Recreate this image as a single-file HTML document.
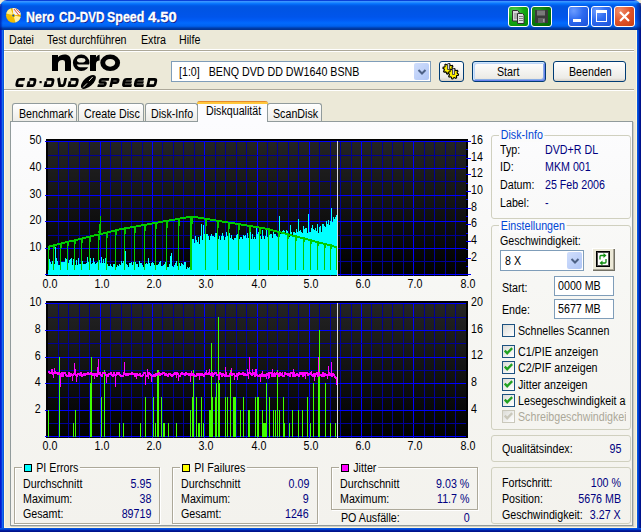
<!DOCTYPE html><html><head><meta charset="utf-8"><style>
*{margin:0;padding:0;box-sizing:border-box}
html,body{width:641px;height:532px;overflow:hidden;background:#ECE9D8;position:relative;font-family:"Liberation Sans",sans-serif;font-size:11px}
.a{position:absolute}
.t{position:absolute;white-space:nowrap;line-height:13px;font-size:12px;letter-spacing:0;transform:scaleX(0.89);transform-origin:0 0}
.gb{position:absolute;border:1px solid #D0D0BF;border-radius:3px}
.eg{position:absolute;border:1px solid #ACA899;box-shadow:1px 1px 0 #fff, inset 1px 1px 0 #fff}
.cb{position:absolute;width:13px;height:13px;border:1px solid #1C5180;background:linear-gradient(135deg,#DCDCD7,#fff)}
.inp{position:absolute;border:1px solid #7F9DB9;background:#fff}
</style></head><body>

<div class="a" style="left:0;top:0;width:641px;height:30px;border-radius:7px 7px 0 0;background:linear-gradient(to bottom,#0A40D8 0px,#0A40D8 1px,#3D95FF 1px,#3593FF 2px,#288EFF 2px,#1A82FF 3px,#127DFF 3px,#036FFC 4px,#0262EE 5px,#0057E5 6px,#0054E3 8px,#0055EB 17px,#005BF5 20px,#026AFE 23px,#0062EF 26px,#0052D6 27px,#0040AB 28px,#003092 30px)"></div>
<div class="a" style="left:636px;top:3px;width:5px;height:27px;background:linear-gradient(to right,rgba(0,20,120,0) 0,rgba(0,20,120,0.25) 1px,rgba(0,20,120,0.45) 3px,rgba(0,10,100,0.7) 5px)"></div>
<div class="a" style="left:0;top:4px;width:3px;height:26px;background:linear-gradient(to right,rgba(0,10,140,0.55) 0,rgba(0,10,140,0.55) 1px,rgba(0,10,140,0.15) 2px,rgba(0,10,140,0) 3px)"></div>
<div class="a" style="left:0;top:30px;width:4px;height:502px;background:linear-gradient(to right,#0019CF 0,#0019CF 1px,#0831D9 1px,#0831D9 2px,#166AEE 2px,#166AEE 3px,#0855DD 3px)"></div>
<div class="a" style="left:637px;top:30px;width:4px;height:502px;background:linear-gradient(to right,#0855DD 0,#0855DD 1px,#0040D0 1px,#0040D0 2px,#001EA0 2px,#001EA0 3px,#00138C 3px)"></div>
<div class="a" style="left:0;top:528px;width:641px;height:4px;background:linear-gradient(to bottom,#0855DD 0,#0855DD 1px,#0040D0 1px,#0040D0 2px,#001EA0 2px,#001EA0 3px,#00138C 3px)"></div>
<div class="a" style="left:4px;top:30px;width:1px;height:498px;background:#FFF8DC"></div>
<div class="a" style="left:636px;top:30px;width:1px;height:498px;background:#FFF8DC"></div>
<div class="a" style="left:4px;top:527px;width:633px;height:1px;background:#FFF8DC"></div>
<svg class="a" style="left:5px;top:7px" width="18" height="18" viewBox="0 0 18 18">
<circle cx="8.4" cy="8.3" r="7.4" fill="#F0BC00"/>
<path d="M8.4 8.3L1.2 6.6A7.4 7.4 0 0 1 5.6 1.4Z" fill="#FFEE90"/>
<path d="M8.4 8.3L15.6 10A7.4 7.4 0 0 1 10.5 15.4Z" fill="#FFF0A0"/>
<path d="M8.4 8.3L7.6 0.95A7.4 7.4 0 0 1 15.8 7.6Z" fill="#F2F2F2"/>
<path d="M9 2L14 8.5M11 1.8L15 6" stroke="#E83818" stroke-width="1" opacity="0.85"/>
<circle cx="8.3" cy="8.6" r="1.9" fill="#F8D000"/>
<circle cx="8.3" cy="8.6" r="1.1" fill="#1848B8"/>
</svg>
<div class="t" style="left:25.8px;top:7px;font-size:14px;font-weight:bold;color:#fff;line-height:20px;letter-spacing:0;text-shadow:1px 1px #0A1E8C;-webkit-text-stroke:0.3px #fff;transform:scaleX(0.891);transform-origin:0 0">Nero</div>
<div class="t" style="left:58.6px;top:7px;font-size:14px;font-weight:bold;color:#fff;line-height:20px;letter-spacing:0;text-shadow:1px 1px #0A1E8C;-webkit-text-stroke:0.3px #fff;transform:scaleX(0.835);transform-origin:0 0">CD-DVD</div>
<div class="t" style="left:107.4px;top:7px;font-size:14px;font-weight:bold;color:#fff;line-height:20px;letter-spacing:0;text-shadow:1px 1px #0A1E8C;-webkit-text-stroke:0.3px #fff;transform:scaleX(0.888);transform-origin:0 0">Speed</div>
<div class="t" style="left:148.4px;top:7px;font-size:14px;font-weight:bold;color:#fff;line-height:20px;letter-spacing:0;text-shadow:1px 1px #0A1E8C;-webkit-text-stroke:0.3px #fff;transform:scaleX(1.052);transform-origin:0 0">4.50</div>
<div class="a" style="left:508px;top:6px;width:21px;height:21px;border:1px solid #fff;border-radius:3px;background:radial-gradient(circle at 30% 25%,#5AD05A 0%,#16A816 45%,#008A00 100%)"></div>
<svg class="a" style="left:511px;top:9px" width="16" height="16" viewBox="0 0 16 16">
<path d="M1.5 1.5h5l1.5 1.5v9h-6.5z" fill="#D8D8D8" stroke="#303030" stroke-width="1"/>
<path d="M6.5 4.5h5l1.5 1.5v8.5h-6.5z" fill="#E0E0E0" stroke="#303030" stroke-width="1"/>
<path d="M3 5h3M3 7h3M3 9h3M8 7.5h4M8 9.5h4M8 11.5h4" stroke="#808080" stroke-width="1"/>
</svg>
<div class="a" style="left:531px;top:6px;width:21px;height:21px;border:1px solid #fff;border-radius:3px;background:radial-gradient(circle at 30% 25%,#2A9A2A 0%,#0A7A0A 50%,#006600 100%)"></div>
<svg class="a" style="left:534px;top:9px" width="15" height="15" viewBox="0 0 15 15">
<rect x="1" y="1" width="13" height="13" fill="#3A3A3A"/>
<rect x="3" y="1.5" width="8" height="5" fill="#7A7A7A"/>
<rect x="4" y="9" width="7" height="5" fill="#606060"/>
<rect x="9" y="10" width="1.5" height="3" fill="#9A9A9A"/>
</svg>
<div class="a" style="left:568px;top:6px;width:21px;height:21px;border:1px solid #fff;border-radius:3px;background:radial-gradient(circle at 25% 20%,#6C9CFF 0%,#2E6BF0 45%,#1A50D8 100%)"></div>
<div class="a" style="left:573px;top:19px;width:8px;height:3px;background:#fff"></div>
<div class="a" style="left:591px;top:6px;width:21px;height:21px;border:1px solid #fff;border-radius:3px;background:radial-gradient(circle at 25% 20%,#6C9CFF 0%,#2E6BF0 45%,#1A50D8 100%)"></div>
<div class="a" style="left:596px;top:10px;width:11px;height:12px;border:1px solid #fff;border-top-width:3px"></div>
<div class="a" style="left:614px;top:6px;width:21px;height:21px;border:1px solid #fff;border-radius:3px;background:radial-gradient(circle at 25% 20%,#F08E6C 0%,#E0542A 50%,#C83E10 100%)"></div>
<svg class="a" style="left:619px;top:11px" width="11" height="11" viewBox="0 0 11 11"><path d="M1 1L10 10M10 1L1 10" stroke="#fff" stroke-width="2.2"/></svg>

<div class="t" style="left:9px;top:34px;color:#000;">Datei</div>
<div class="t" style="left:47px;top:34px;color:#000;">Test durchführen</div>
<div class="t" style="left:141px;top:34px;color:#000;">Extra</div>
<div class="t" style="left:179px;top:34px;color:#000;">Hilfe</div>
<div class="a" style="left:4px;top:49px;width:630px;height:1px;background:#fff"></div>
<div class="a" style="left:4px;top:50px;width:630px;height:1px;background:#ACA899"></div>
<div class="a" style="left:4px;top:51px;width:630px;height:1px;background:#fff"></div>
<div class="a" style="left:4px;top:89px;width:630px;height:1px;background:#ACA899"></div>
<div class="a" style="left:4px;top:90px;width:630px;height:1px;background:#fff"></div>
<svg class="a" style="left:0;top:50px" width="170" height="40" viewBox="0 50 170 40">
<path d="M52 71V55H58V57.2C59.5 55.5 61.8 54.5 64.5 54.5C68.8 54.5 71 57 71 61.5V71H65V62.5C65 60.8 64.2 60 62.4 60C59.8 60 58 61.3 58 63.8V71Z" fill="#000"/>
<ellipse cx="81.2" cy="62.8" rx="8.3" ry="8.3" fill="#000"/>
<ellipse cx="81.2" cy="60.2" rx="4.2" ry="2.3" fill="#ECE9D8"/>
<path d="M76.8 64.6H90V67.2H80.2C78.6 67.2 77.3 66.2 76.8 64.6Z" fill="#ECE9D8"/>
<path d="M90 71V55H96V57.6C97 55.6 98.2 54.8 99.6 54.8V60.6C97.6 60.6 96 61.6 96 64.2V71Z" fill="#000"/>
<ellipse cx="110.2" cy="62.8" rx="9.9" ry="8.3" fill="#000"/>
<ellipse cx="110.2" cy="62.8" rx="5.0" ry="3.9" fill="#ECE9D8"/>
<g fill="none" stroke="#000" stroke-width="2.7" stroke-linecap="square"><path transform="translate(16.80 78) skewX(-12.5)" d="M6.8999999999999995 1.3H3.3Q1.3 1.3 1.3 3.3V5.7Q1.3 7.7 3.3 7.7H6.8999999999999995"/><path transform="translate(28.50 78) skewX(-12.5)" d="M2.50 1.3H5.2Q7.2 1.3 7.2 3.3V5.7Q7.2 7.7 5.2 7.7H1.3M1.3 4.6V7.7"/><path transform="translate(45.50 78) skewX(-12.5)" d="M2.50 1.3H6.199999999999999Q8.2 1.3 8.2 3.3V5.7Q8.2 7.7 6.199999999999999 7.7H1.3M1.3 4.6V7.7"/><path transform="translate(57.70 78) skewX(-12.5)" d="M1.3 1.3L3.72 7.7H5.999999999999997Q7.999999999999997 7.7 7.999999999999997 5.7V1.3"/><path transform="translate(69.50 78) skewX(-12.5)" d="M2.50 1.3H6.4999999999999964Q8.499999999999996 1.3 8.499999999999996 3.3V5.7Q8.499999999999996 7.7 6.4999999999999964 7.7H1.3M1.3 4.6V7.7"/><path transform="translate(99.40 78) skewX(-12.5)" d="M8.599999999999994 1.3H2.9000000000000004Q1.3 1.3 1.3 2.9Q1.3 4.5 2.9000000000000004 4.5H5.699999999999994Q7.2999999999999945 4.5 7.2999999999999945 6.1Q7.2999999999999945 7.7 5.699999999999994 7.7H1.3"/><path transform="translate(111.30 78) skewX(-12.5)" d="M1.3 7.7V1.3H5.8000000000000025Q7.400000000000003 1.3 7.400000000000003 2.9Q7.400000000000003 4.6 5.8000000000000025 4.6H1.3"/><path transform="translate(123.50 78) skewX(-12.5)" d="M7.2 1.3H3.3Q1.3 1.3 1.3 3.3V5.7Q1.3 7.7 3.3 7.7H8.5M2.3 4.5H7.7"/><path transform="translate(135.30 78) skewX(-12.5)" d="M7.399999999999989 1.3H3.3Q1.3 1.3 1.3 3.3V5.7Q1.3 7.7 3.3 7.7H8.699999999999989M2.3 4.5H7.899999999999989"/><path transform="translate(148.20 78) skewX(-12.5)" d="M1.3 1.3H6.300000000000022Q8.300000000000022 1.3 8.300000000000022 3.3V5.7Q8.300000000000022 7.7 6.300000000000022 7.7H1.3Z"/></g>
<rect x="39.5" y="81" width="2.2" height="2.2" fill="#000"/>
<g transform="translate(88.4 81.9) rotate(-42)"><ellipse cx="0" cy="0" rx="9.2" ry="4.5" fill="#000"/><path d="M-7.5 0.6L-2 0.2M1 -0.2L6.5 -0.8" fill="none" stroke="#ECE9D8" stroke-width="0.9"/></g>
</svg>
<div class="inp" style="left:171px;top:61px;width:260px;height:21px"></div>
<div class="a" style="left:414px;top:63px;width:15px;height:17px;border-radius:2px;background:linear-gradient(135deg,#D0DEFC,#B0C6F6)"></div>
<svg class="a" style="left:417px;top:68px" width="10" height="8" viewBox="0 0 10 8"><path d="M1.5 2L5 5.5L8.5 2" fill="none" stroke="#4D6185" stroke-width="2"/></svg>
<div class="t" style="left:179px;top:66px;color:#000;">[1:0]&nbsp;&nbsp; BENQ DVD DD DW1640 BSNB</div>
<div class="a" style="left:439px;top:61px;width:25px;height:21px;border:1px solid #003C74;border-radius:3px;background:linear-gradient(to bottom,#fff,#ECEBE6 80%,#D6D0C5)"></div>
<svg class="a" style="left:439px;top:61px" width="25" height="21" viewBox="0 0 25 21">
<polygon points="14.47,8.32 14.27,9.34 12.73,9.69 12.29,10.34 12.56,11.90 11.70,12.47 10.36,11.63 9.59,11.78 8.68,13.07 7.66,12.87 7.31,11.33 6.66,10.89 5.10,11.16 4.53,10.30 5.37,8.96 5.22,8.19 3.93,7.28 4.13,6.26 5.67,5.91 6.11,5.26 5.84,3.70 6.70,3.13 8.04,3.97 8.81,3.82 9.72,2.53 10.74,2.73 11.09,4.27 11.74,4.71 13.30,4.44 13.87,5.30 13.03,6.64 13.18,7.41" fill="#FFF000" stroke="#000" stroke-width="1.1"/>
<polygon points="19.57,13.22 19.37,14.24 17.83,14.59 17.39,15.24 17.66,16.80 16.80,17.37 15.46,16.53 14.69,16.68 13.78,17.97 12.76,17.77 12.41,16.23 11.76,15.79 10.20,16.06 9.63,15.20 10.47,13.86 10.32,13.09 9.03,12.18 9.23,11.16 10.77,10.81 11.21,10.16 10.94,8.60 11.80,8.03 13.14,8.87 13.91,8.72 14.82,7.43 15.84,7.63 16.19,9.17 16.84,9.61 18.40,9.34 18.97,10.20 18.13,11.54 18.28,12.31" fill="#FFF000" stroke="#000" stroke-width="1.1"/>
<path d="M8.5 8.5V3.2L9.5 2L10.5 3.2V8.5z" fill="#D0D0E0" stroke="#303030" stroke-width="0.8"/>
<path d="M13.5 13.5V8.2L14.5 7L15.5 8.2V13.5z" fill="#D0D0E0" stroke="#303030" stroke-width="0.8"/>
</svg>
<div class="a" style="left:472px;top:61px;width:74px;height:21px;border:1px solid #003C74;border-radius:3px;background:linear-gradient(to bottom,#fff,#ECEBE6 85%,#D6D0C5);box-shadow:inset 1px 1px #CEE7FF, inset -1px -1px #6982EE, inset 2px 2px #BCD4F6, inset -2px -2px #89ADE4"></div>
<div class="t" style="left:497px;top:66px;color:#000;">Start</div>
<div class="a" style="left:553px;top:61px;width:73px;height:21px;border:1px solid #003C74;border-radius:3px;background:linear-gradient(to bottom,#fff,#ECEBE6 85%,#D6D0C5)"></div>
<div class="t" style="left:569px;top:66px;color:#000;">Beenden</div>
<div class="a" style="left:12px;top:103px;width:65px;height:19px;border:1px solid #919B9C;border-bottom:none;border-radius:3px 3px 0 0;background:linear-gradient(to bottom,#fff,#ECEBE6)"></div>
<div class="t" style="left:19px;top:108px;color:#000;">Benchmark</div>
<div class="a" style="left:78px;top:103px;width:66px;height:19px;border:1px solid #919B9C;border-bottom:none;border-radius:3px 3px 0 0;background:linear-gradient(to bottom,#fff,#ECEBE6)"></div>
<div class="t" style="left:84px;top:108px;color:#000;">Create Disc</div>
<div class="a" style="left:145px;top:103px;width:53px;height:19px;border:1px solid #919B9C;border-bottom:none;border-radius:3px 3px 0 0;background:linear-gradient(to bottom,#fff,#ECEBE6)"></div>
<div class="t" style="left:151px;top:108px;color:#000;">Disk-Info</div>
<div class="a" style="left:267px;top:103px;width:55px;height:19px;border:1px solid #919B9C;border-bottom:none;border-radius:3px 3px 0 0;background:linear-gradient(to bottom,#fff,#ECEBE6)"></div>
<div class="t" style="left:273px;top:108px;color:#000;">ScanDisk</div>
<div class="a" style="left:10px;top:121px;width:623px;height:405px;border:1px solid #919B9C;border-left-color:#919B9C;background:linear-gradient(to bottom,#FCFCFE 0%,#F7F7F4 40%,#F3F2ED 100%);box-shadow:1px 1px 0 #D0CEC4"></div>
<div class="a" style="left:197px;top:101px;width:71px;height:21px;border:1px solid #919B9C;border-top:none;border-bottom:none;border-radius:3px 3px 0 0;background:#FCFCFE"></div>
<div class="a" style="left:197px;top:101px;width:71px;height:3px;border-radius:3px 3px 0 0;background:linear-gradient(to bottom,#E68B2C 0,#E68B2C 1px,#FFC73C 1px)"></div>
<div class="t" style="left:206px;top:105px;color:#000;">Diskqualität</div>
<svg class="a" style="left:0;top:0" width="641" height="532" shape-rendering="crispEdges">
<defs><linearGradient id="cg" x1="0" y1="0" x2="0" y2="1"><stop offset="0" stop-color="#242424"/><stop offset="1" stop-color="#000"/></linearGradient></defs>
<rect x="46" y="139" width="422" height="137" fill="#000"/>
<rect x="48" y="141" width="418" height="134" fill="url(#cg)"/>
<rect x="58" y="141" width="1" height="135" fill="#000096"/>
<rect x="68" y="141" width="1" height="135" fill="#000096"/>
<rect x="79" y="141" width="1" height="135" fill="#000096"/>
<rect x="89" y="141" width="1" height="135" fill="#000096"/>
<rect x="100" y="141" width="1" height="135" fill="#0000FF"/>
<rect x="110" y="141" width="1" height="135" fill="#000096"/>
<rect x="121" y="141" width="1" height="135" fill="#000096"/>
<rect x="131" y="141" width="1" height="135" fill="#000096"/>
<rect x="142" y="141" width="1" height="135" fill="#000096"/>
<rect x="152" y="141" width="1" height="135" fill="#0000FF"/>
<rect x="162" y="141" width="1" height="135" fill="#000096"/>
<rect x="173" y="141" width="1" height="135" fill="#000096"/>
<rect x="183" y="141" width="1" height="135" fill="#000096"/>
<rect x="194" y="141" width="1" height="135" fill="#000096"/>
<rect x="204" y="141" width="1" height="135" fill="#0000FF"/>
<rect x="215" y="141" width="1" height="135" fill="#000096"/>
<rect x="225" y="141" width="1" height="135" fill="#000096"/>
<rect x="236" y="141" width="1" height="135" fill="#000096"/>
<rect x="246" y="141" width="1" height="135" fill="#000096"/>
<rect x="257" y="141" width="1" height="135" fill="#0000FF"/>
<rect x="267" y="141" width="1" height="135" fill="#000096"/>
<rect x="277" y="141" width="1" height="135" fill="#000096"/>
<rect x="288" y="141" width="1" height="135" fill="#000096"/>
<rect x="298" y="141" width="1" height="135" fill="#000096"/>
<rect x="309" y="141" width="1" height="135" fill="#0000FF"/>
<rect x="319" y="141" width="1" height="135" fill="#000096"/>
<rect x="330" y="141" width="1" height="135" fill="#000096"/>
<rect x="340" y="141" width="1" height="135" fill="#000096"/>
<rect x="351" y="141" width="1" height="135" fill="#000096"/>
<rect x="361" y="141" width="1" height="135" fill="#0000FF"/>
<rect x="371" y="141" width="1" height="135" fill="#000096"/>
<rect x="382" y="141" width="1" height="135" fill="#000096"/>
<rect x="392" y="141" width="1" height="135" fill="#000096"/>
<rect x="403" y="141" width="1" height="135" fill="#000096"/>
<rect x="413" y="141" width="1" height="135" fill="#0000FF"/>
<rect x="424" y="141" width="1" height="135" fill="#000096"/>
<rect x="434" y="141" width="1" height="135" fill="#000096"/>
<rect x="445" y="141" width="1" height="135" fill="#000096"/>
<rect x="455" y="141" width="1" height="135" fill="#000096"/>
<rect x="45" y="274" width="421" height="1" fill="#0000FF"/>
<rect x="48" y="261" width="418" height="1" fill="#000096"/>
<rect x="45" y="248" width="421" height="1" fill="#0000FF"/>
<rect x="48" y="235" width="418" height="1" fill="#000096"/>
<rect x="45" y="221" width="421" height="1" fill="#0000FF"/>
<rect x="48" y="208" width="418" height="1" fill="#000096"/>
<rect x="45" y="195" width="421" height="1" fill="#0000FF"/>
<rect x="48" y="181" width="418" height="1" fill="#000096"/>
<rect x="45" y="168" width="421" height="1" fill="#0000FF"/>
<rect x="48" y="155" width="418" height="1" fill="#000096"/>
<rect x="45" y="141" width="421" height="1" fill="#0000FF"/>
<rect x="46" y="301" width="422" height="137" fill="#000"/>
<rect x="48" y="303" width="418" height="134" fill="url(#cg)"/>
<rect x="58" y="303" width="1" height="135" fill="#000096"/>
<rect x="68" y="303" width="1" height="135" fill="#000096"/>
<rect x="79" y="303" width="1" height="135" fill="#000096"/>
<rect x="89" y="303" width="1" height="135" fill="#000096"/>
<rect x="100" y="303" width="1" height="135" fill="#0000FF"/>
<rect x="110" y="303" width="1" height="135" fill="#000096"/>
<rect x="121" y="303" width="1" height="135" fill="#000096"/>
<rect x="131" y="303" width="1" height="135" fill="#000096"/>
<rect x="142" y="303" width="1" height="135" fill="#000096"/>
<rect x="152" y="303" width="1" height="135" fill="#0000FF"/>
<rect x="162" y="303" width="1" height="135" fill="#000096"/>
<rect x="173" y="303" width="1" height="135" fill="#000096"/>
<rect x="183" y="303" width="1" height="135" fill="#000096"/>
<rect x="194" y="303" width="1" height="135" fill="#000096"/>
<rect x="204" y="303" width="1" height="135" fill="#0000FF"/>
<rect x="215" y="303" width="1" height="135" fill="#000096"/>
<rect x="225" y="303" width="1" height="135" fill="#000096"/>
<rect x="236" y="303" width="1" height="135" fill="#000096"/>
<rect x="246" y="303" width="1" height="135" fill="#000096"/>
<rect x="257" y="303" width="1" height="135" fill="#0000FF"/>
<rect x="267" y="303" width="1" height="135" fill="#000096"/>
<rect x="277" y="303" width="1" height="135" fill="#000096"/>
<rect x="288" y="303" width="1" height="135" fill="#000096"/>
<rect x="298" y="303" width="1" height="135" fill="#000096"/>
<rect x="309" y="303" width="1" height="135" fill="#0000FF"/>
<rect x="319" y="303" width="1" height="135" fill="#000096"/>
<rect x="330" y="303" width="1" height="135" fill="#000096"/>
<rect x="340" y="303" width="1" height="135" fill="#000096"/>
<rect x="351" y="303" width="1" height="135" fill="#000096"/>
<rect x="361" y="303" width="1" height="135" fill="#0000FF"/>
<rect x="371" y="303" width="1" height="135" fill="#000096"/>
<rect x="382" y="303" width="1" height="135" fill="#000096"/>
<rect x="392" y="303" width="1" height="135" fill="#000096"/>
<rect x="403" y="303" width="1" height="135" fill="#000096"/>
<rect x="413" y="303" width="1" height="135" fill="#0000FF"/>
<rect x="424" y="303" width="1" height="135" fill="#000096"/>
<rect x="434" y="303" width="1" height="135" fill="#000096"/>
<rect x="445" y="303" width="1" height="135" fill="#000096"/>
<rect x="455" y="303" width="1" height="135" fill="#000096"/>
<rect x="45" y="436" width="421" height="1" fill="#0000FF"/>
<rect x="48" y="423" width="418" height="1" fill="#000096"/>
<rect x="45" y="410" width="421" height="1" fill="#0000FF"/>
<rect x="48" y="397" width="418" height="1" fill="#000096"/>
<rect x="45" y="383" width="421" height="1" fill="#0000FF"/>
<rect x="48" y="370" width="418" height="1" fill="#000096"/>
<rect x="45" y="357" width="421" height="1" fill="#0000FF"/>
<rect x="48" y="343" width="418" height="1" fill="#000096"/>
<rect x="45" y="330" width="421" height="1" fill="#0000FF"/>
<rect x="48" y="317" width="418" height="1" fill="#000096"/>
<rect x="45" y="303" width="421" height="1" fill="#0000FF"/>
<rect x="466" y="274" width="5" height="1" fill="#0000FF"/>
<rect x="466" y="266" width="2" height="1" fill="#0000FF"/>
<rect x="466" y="258" width="5" height="1" fill="#0000FF"/>
<rect x="466" y="249" width="2" height="1" fill="#0000FF"/>
<rect x="466" y="241" width="5" height="1" fill="#0000FF"/>
<rect x="466" y="233" width="2" height="1" fill="#0000FF"/>
<rect x="466" y="224" width="5" height="1" fill="#0000FF"/>
<rect x="466" y="216" width="2" height="1" fill="#0000FF"/>
<rect x="466" y="208" width="5" height="1" fill="#0000FF"/>
<rect x="466" y="199" width="2" height="1" fill="#0000FF"/>
<rect x="466" y="191" width="5" height="1" fill="#0000FF"/>
<rect x="466" y="183" width="2" height="1" fill="#0000FF"/>
<rect x="466" y="174" width="5" height="1" fill="#0000FF"/>
<rect x="466" y="166" width="2" height="1" fill="#0000FF"/>
<rect x="466" y="158" width="5" height="1" fill="#0000FF"/>
<rect x="466" y="149" width="2" height="1" fill="#0000FF"/>
<rect x="466" y="141" width="5" height="1" fill="#0000FF"/>
<path d="M48 262h1v13h-1zM49 259h1v16h-1zM50 262h1v13h-1zM51 264h1v11h-1zM52 261h1v14h-1zM53 264h1v11h-1zM54 264h1v11h-1zM55 247h1v28h-1zM56 258h1v17h-1zM57 261h1v14h-1zM58 265h1v10h-1zM59 265h1v10h-1zM60 254h1v21h-1zM61 262h1v13h-1zM62 262h1v13h-1zM63 262h1v13h-1zM64 262h1v13h-1zM65 258h1v17h-1zM66 259h1v16h-1zM67 263h1v12h-1zM68 263h1v12h-1zM69 260h1v15h-1zM70 259h1v16h-1zM71 258h1v17h-1zM72 265h1v10h-1zM73 259h1v16h-1zM74 258h1v17h-1zM75 265h1v10h-1zM76 260h1v15h-1zM77 265h1v10h-1zM78 258h1v17h-1zM79 264h1v11h-1zM80 264h1v11h-1zM81 260h1v15h-1zM82 261h1v14h-1zM83 264h1v11h-1zM84 264h1v11h-1zM85 264h1v11h-1zM86 263h1v12h-1zM87 257h1v18h-1zM88 262h1v13h-1zM89 263h1v12h-1zM90 258h1v17h-1zM91 264h1v11h-1zM92 263h1v12h-1zM93 258h1v17h-1zM94 262h1v13h-1zM95 264h1v11h-1zM96 263h1v12h-1zM97 262h1v13h-1zM98 257h1v18h-1zM99 260h1v15h-1zM100 263h1v12h-1zM101 257h1v18h-1zM102 263h1v12h-1zM103 259h1v16h-1zM104 263h1v12h-1zM105 258h1v17h-1zM106 261h1v14h-1zM107 264h1v11h-1zM108 266h1v9h-1zM109 266h1v9h-1zM110 264h1v11h-1zM111 266h1v9h-1zM112 267h1v8h-1zM113 264h1v11h-1zM114 264h1v11h-1zM115 262h1v13h-1zM116 267h1v8h-1zM117 265h1v10h-1zM118 266h1v9h-1zM119 264h1v11h-1zM120 265h1v10h-1zM121 261h1v14h-1zM122 263h1v12h-1zM123 261h1v14h-1zM124 262h1v13h-1zM125 251h1v24h-1zM126 264h1v11h-1zM127 265h1v10h-1zM128 267h1v8h-1zM129 263h1v12h-1zM130 263h1v12h-1zM131 262h1v13h-1zM132 265h1v10h-1zM133 262h1v13h-1zM134 265h1v10h-1zM135 262h1v13h-1zM136 264h1v11h-1zM137 264h1v11h-1zM138 267h1v8h-1zM139 261h1v14h-1zM140 263h1v12h-1zM141 263h1v12h-1zM142 265h1v10h-1zM143 267h1v8h-1zM144 267h1v8h-1zM145 264h1v11h-1zM146 263h1v12h-1zM147 264h1v11h-1zM148 258h1v17h-1zM149 263h1v12h-1zM150 266h1v9h-1zM151 263h1v12h-1zM152 262h1v13h-1zM153 263h1v12h-1zM154 265h1v10h-1zM155 262h1v13h-1zM156 265h1v10h-1zM157 265h1v10h-1zM158 264h1v11h-1zM159 262h1v13h-1zM160 261h1v14h-1zM161 266h1v9h-1zM162 266h1v9h-1zM163 265h1v10h-1zM164 264h1v11h-1zM165 262h1v13h-1zM166 265h1v10h-1zM167 267h1v8h-1zM168 267h1v8h-1zM169 264h1v11h-1zM170 256h1v19h-1zM171 253h1v22h-1zM172 266h1v9h-1zM173 267h1v8h-1zM174 265h1v10h-1zM175 263h1v12h-1zM176 261h1v14h-1zM177 266h1v9h-1zM178 257h1v18h-1zM179 263h1v12h-1zM180 266h1v9h-1zM181 263h1v12h-1zM182 264h1v11h-1zM183 265h1v10h-1zM184 262h1v13h-1zM185 262h1v13h-1zM186 269h1v6h-1zM187 267h1v8h-1zM188 268h1v7h-1zM189 267h1v8h-1zM190 267h1v8h-1zM191 239h1v36h-1zM192 239h1v36h-1zM193 239h1v36h-1zM194 243h1v32h-1zM195 236h1v39h-1zM196 240h1v35h-1zM197 242h1v33h-1zM198 237h1v38h-1zM199 244h1v31h-1zM200 236h1v39h-1zM201 224h1v51h-1zM202 240h1v35h-1zM203 225h1v50h-1zM204 234h1v41h-1zM205 239h1v36h-1zM206 234h1v41h-1zM207 234h1v41h-1zM208 236h1v39h-1zM209 240h1v35h-1zM210 236h1v39h-1zM211 234h1v41h-1zM212 236h1v39h-1zM213 236h1v39h-1zM214 237h1v38h-1zM215 233h1v42h-1zM216 233h1v42h-1zM217 236h1v39h-1zM218 239h1v36h-1zM219 236h1v39h-1zM220 240h1v35h-1zM221 236h1v39h-1zM222 233h1v42h-1zM223 236h1v39h-1zM224 240h1v35h-1zM225 237h1v38h-1zM226 232h1v43h-1zM227 236h1v39h-1zM228 237h1v38h-1zM229 233h1v42h-1zM230 238h1v37h-1zM231 235h1v40h-1zM232 239h1v36h-1zM233 240h1v35h-1zM234 238h1v37h-1zM235 238h1v37h-1zM236 235h1v40h-1zM237 234h1v41h-1zM238 236h1v39h-1zM239 239h1v36h-1zM240 237h1v38h-1zM241 237h1v38h-1zM242 239h1v36h-1zM243 235h1v40h-1zM244 236h1v39h-1zM245 235h1v40h-1zM246 238h1v37h-1zM247 233h1v42h-1zM248 238h1v37h-1zM249 232h1v43h-1zM250 232h1v43h-1zM251 239h1v36h-1zM252 234h1v41h-1zM253 239h1v36h-1zM254 237h1v38h-1zM255 239h1v36h-1zM256 227h1v48h-1zM257 234h1v41h-1zM258 232h1v43h-1zM259 236h1v39h-1zM260 236h1v39h-1zM261 239h1v36h-1zM262 230h1v45h-1zM263 236h1v39h-1zM264 239h1v36h-1zM265 236h1v39h-1zM266 229h1v46h-1zM267 237h1v38h-1zM268 229h1v46h-1zM269 231h1v44h-1zM270 234h1v41h-1zM271 234h1v41h-1zM272 238h1v37h-1zM273 230h1v45h-1zM274 234h1v41h-1zM275 234h1v41h-1zM276 236h1v39h-1zM277 237h1v38h-1zM278 231h1v44h-1zM279 216h1v59h-1zM280 234h1v41h-1zM281 233h1v42h-1zM282 231h1v44h-1zM283 230h1v45h-1zM284 231h1v44h-1zM285 234h1v41h-1zM286 230h1v45h-1zM287 231h1v44h-1zM288 234h1v41h-1zM289 237h1v38h-1zM290 225h1v50h-1zM291 232h1v43h-1zM292 236h1v39h-1zM293 232h1v43h-1zM294 232h1v43h-1zM295 233h1v42h-1zM296 229h1v46h-1zM297 232h1v43h-1zM298 219h1v56h-1zM299 231h1v44h-1zM300 230h1v45h-1zM301 232h1v43h-1zM302 233h1v42h-1zM303 226h1v49h-1zM304 229h1v46h-1zM305 228h1v47h-1zM306 228h1v47h-1zM307 233h1v42h-1zM308 214h1v61h-1zM309 232h1v43h-1zM310 232h1v43h-1zM311 228h1v47h-1zM312 225h1v50h-1zM313 229h1v46h-1zM314 230h1v45h-1zM315 228h1v47h-1zM316 231h1v44h-1zM317 224h1v51h-1zM318 233h1v42h-1zM319 227h1v48h-1zM320 226h1v49h-1zM321 232h1v43h-1zM322 224h1v51h-1zM323 224h1v51h-1zM324 226h1v49h-1zM325 227h1v48h-1zM326 221h1v54h-1zM327 224h1v51h-1zM328 220h1v55h-1zM329 225h1v50h-1zM330 221h1v54h-1zM331 208h1v67h-1zM332 222h1v53h-1zM333 217h1v58h-1zM334 219h1v56h-1zM335 217h1v58h-1zM336 215h1v60h-1z" fill="#00FFFF"/>
<path d="M48 246h1v2h-1zM49 245h1v2h-1zM50 245h1v2h-1zM51 245h1v2h-1zM52 245h1v2h-1zM53 244h1v2h-1zM54 244h1v2h-1zM55 244h1v2h-1zM56 244h1v2h-1zM57 243h1v2h-1zM58 243h1v2h-1zM59 243h1v2h-1zM60 243h1v2h-1zM61 242h1v2h-1zM62 242h1v2h-1zM63 242h1v2h-1zM64 242h1v2h-1zM65 241h1v2h-1zM66 241h1v2h-1zM67 241h1v2h-1zM68 241h1v2h-1zM69 240h1v2h-1zM70 240h1v2h-1zM71 240h1v2h-1zM72 240h1v2h-1zM73 240h1v2h-1zM74 239h1v2h-1zM75 239h1v2h-1zM76 239h1v2h-1zM77 239h1v2h-1zM78 238h1v2h-1zM79 238h1v2h-1zM80 238h1v2h-1zM81 238h1v2h-1zM82 237h1v2h-1zM83 237h1v2h-1zM84 237h1v2h-1zM85 237h1v2h-1zM86 236h1v2h-1zM87 236h1v2h-1zM88 236h1v2h-1zM89 236h1v2h-1zM90 235h1v2h-1zM91 235h1v2h-1zM92 235h1v2h-1zM93 235h1v2h-1zM94 234h1v2h-1zM95 234h1v2h-1zM96 234h1v2h-1zM97 234h1v2h-1zM98 234h1v2h-1zM99 233h1v2h-1zM100 233h1v2h-1zM101 233h1v2h-1zM102 233h1v2h-1zM103 232h1v2h-1zM104 232h1v2h-1zM105 232h1v2h-1zM106 232h1v2h-1zM107 231h1v2h-1zM108 231h1v2h-1zM109 231h1v2h-1zM110 231h1v2h-1zM111 230h1v2h-1zM112 230h1v2h-1zM113 230h1v2h-1zM114 230h1v2h-1zM115 229h1v2h-1zM116 229h1v2h-1zM117 229h1v2h-1zM118 229h1v2h-1zM119 228h1v2h-1zM120 228h1v2h-1zM121 228h1v2h-1zM122 228h1v2h-1zM123 228h1v2h-1zM124 227h1v2h-1zM125 227h1v2h-1zM126 227h1v2h-1zM127 227h1v2h-1zM128 227h1v2h-1zM129 227h1v2h-1zM130 226h1v2h-1zM131 226h1v2h-1zM132 226h1v2h-1zM133 226h1v2h-1zM134 226h1v2h-1zM135 226h1v2h-1zM136 225h1v2h-1zM137 225h1v2h-1zM138 225h1v2h-1zM139 225h1v2h-1zM140 225h1v2h-1zM141 224h1v2h-1zM142 224h1v2h-1zM143 224h1v2h-1zM144 224h1v2h-1zM145 224h1v2h-1zM146 224h1v2h-1zM147 223h1v2h-1zM148 223h1v2h-1zM149 223h1v2h-1zM150 223h1v2h-1zM151 223h1v2h-1zM152 222h1v2h-1zM153 222h1v2h-1zM154 222h1v2h-1zM155 222h1v2h-1zM156 222h1v2h-1zM157 222h1v2h-1zM158 221h1v2h-1zM159 221h1v2h-1zM160 221h1v2h-1zM161 221h1v2h-1zM162 221h1v2h-1zM163 220h1v2h-1zM164 220h1v2h-1zM165 220h1v2h-1zM166 220h1v2h-1zM167 220h1v2h-1zM168 220h1v2h-1zM169 219h1v2h-1zM170 219h1v2h-1zM171 219h1v2h-1zM172 219h1v2h-1zM173 219h1v2h-1zM174 219h1v2h-1zM175 218h1v2h-1zM176 218h1v2h-1zM177 218h1v2h-1zM178 218h1v2h-1zM179 218h1v2h-1zM180 217h1v2h-1zM181 217h1v2h-1zM182 217h1v2h-1zM183 217h1v2h-1zM184 217h1v2h-1zM185 217h1v2h-1zM186 216h1v2h-1zM187 216h1v2h-1zM188 216h1v2h-1zM189 216h1v2h-1zM190 216h1v2h-1zM191 216h1v2h-1zM192 216h1v2h-1zM193 216h1v2h-1zM194 216h1v2h-1zM195 216h1v2h-1zM196 216h1v2h-1zM197 216h1v2h-1zM198 217h1v2h-1zM199 217h1v2h-1zM200 217h1v2h-1zM201 217h1v2h-1zM202 217h1v2h-1zM203 217h1v2h-1zM204 218h1v2h-1zM205 218h1v2h-1zM206 218h1v2h-1zM207 218h1v2h-1zM208 218h1v2h-1zM209 218h1v2h-1zM210 219h1v2h-1zM211 219h1v2h-1zM212 219h1v2h-1zM213 219h1v2h-1zM214 219h1v2h-1zM215 219h1v2h-1zM216 220h1v2h-1zM217 220h1v2h-1zM218 220h1v2h-1zM219 220h1v2h-1zM220 220h1v2h-1zM221 220h1v2h-1zM222 221h1v2h-1zM223 221h1v2h-1zM224 221h1v2h-1zM225 221h1v2h-1zM226 221h1v2h-1zM227 221h1v2h-1zM228 222h1v2h-1zM229 222h1v2h-1zM230 222h1v2h-1zM231 222h1v2h-1zM232 222h1v2h-1zM233 222h1v2h-1zM234 222h1v2h-1zM235 223h1v2h-1zM236 223h1v2h-1zM237 223h1v2h-1zM238 223h1v2h-1zM239 223h1v2h-1zM240 223h1v2h-1zM241 224h1v2h-1zM242 224h1v2h-1zM243 224h1v2h-1zM244 224h1v2h-1zM245 224h1v2h-1zM246 224h1v2h-1zM247 225h1v2h-1zM248 225h1v2h-1zM249 225h1v2h-1zM250 225h1v2h-1zM251 225h1v2h-1zM252 225h1v2h-1zM253 226h1v2h-1zM254 226h1v2h-1zM255 226h1v2h-1zM256 226h1v2h-1zM257 226h1v2h-1zM258 226h1v2h-1zM259 227h1v2h-1zM260 227h1v2h-1zM261 227h1v2h-1zM262 227h1v2h-1zM263 227h1v2h-1zM264 227h1v2h-1zM265 228h1v2h-1zM266 228h1v2h-1zM267 228h1v2h-1zM268 228h1v2h-1zM269 229h1v2h-1zM270 229h1v2h-1zM271 229h1v2h-1zM272 229h1v2h-1zM273 230h1v2h-1zM274 230h1v2h-1zM275 230h1v2h-1zM276 230h1v2h-1zM277 231h1v2h-1zM278 231h1v2h-1zM279 231h1v2h-1zM280 231h1v2h-1zM281 232h1v2h-1zM282 232h1v2h-1zM283 232h1v2h-1zM284 232h1v2h-1zM285 233h1v2h-1zM286 233h1v2h-1zM287 233h1v2h-1zM288 234h1v2h-1zM289 234h1v2h-1zM290 234h1v2h-1zM291 234h1v2h-1zM292 235h1v2h-1zM293 235h1v2h-1zM294 235h1v2h-1zM295 235h1v2h-1zM296 236h1v2h-1zM297 236h1v2h-1zM298 236h1v2h-1zM299 236h1v2h-1zM300 237h1v2h-1zM301 237h1v2h-1zM302 237h1v2h-1zM303 237h1v2h-1zM304 238h1v2h-1zM305 238h1v2h-1zM306 238h1v2h-1zM307 238h1v2h-1zM308 239h1v2h-1zM309 239h1v2h-1zM310 239h1v2h-1zM311 240h1v2h-1zM312 240h1v2h-1zM313 240h1v2h-1zM314 240h1v2h-1zM315 241h1v2h-1zM316 241h1v2h-1zM317 241h1v2h-1zM318 241h1v2h-1zM319 242h1v2h-1zM320 242h1v2h-1zM321 242h1v2h-1zM322 242h1v2h-1zM323 243h1v2h-1zM324 243h1v2h-1zM325 243h1v2h-1zM326 243h1v2h-1zM327 244h1v2h-1zM328 244h1v2h-1zM329 244h1v2h-1zM330 244h1v2h-1zM331 245h1v2h-1zM332 245h1v2h-1zM333 245h1v2h-1zM334 246h1v2h-1zM335 246h1v2h-1zM336 246h1v2h-1zM337 246h1v2h-1z" fill="#00CC00"/>
<path d="M48 246h1v24h-1zM49 246h1v4h-1zM53 244h1v26h-1zM54 244h1v5h-1zM60 243h1v27h-1zM61 243h1v5h-1zM67 241h1v29h-1zM68 241h1v5h-1zM74 239h1v31h-1zM75 239h1v5h-1zM81 238h1v32h-1zM82 238h1v5h-1zM89 236h1v34h-1zM90 236h1v6h-1zM98 234h1v36h-1zM99 234h1v6h-1zM106 232h1v38h-1zM107 232h1v6h-1zM115 229h1v41h-1zM116 229h1v6h-1zM124 227h1v43h-1zM125 227h1v7h-1zM134 226h1v44h-1zM135 226h1v7h-1zM144 224h1v46h-1zM145 224h1v7h-1zM155 222h1v48h-1zM156 222h1v7h-1zM166 220h1v50h-1zM167 220h1v8h-1zM178 218h1v52h-1zM179 218h1v8h-1zM190 216h1v54h-1zM191 216h1v8h-1zM191 216h1v54h-1zM192 216h1v8h-1zM205 218h1v52h-1zM206 218h1v8h-1zM217 220h1v50h-1zM218 220h1v8h-1zM228 222h1v48h-1zM229 222h1v7h-1zM238 223h1v47h-1zM239 223h1v7h-1zM249 225h1v45h-1zM250 225h1v7h-1zM259 227h1v43h-1zM260 227h1v7h-1zM268 228h1v42h-1zM269 228h1v7h-1zM278 231h1v39h-1zM279 231h1v6h-1zM287 233h1v37h-1zM288 233h1v6h-1zM295 235h1v35h-1zM296 235h1v6h-1zM303 237h1v33h-1zM304 237h1v5h-1zM310 239h1v31h-1zM311 239h1v5h-1zM317 241h1v29h-1zM318 241h1v5h-1zM324 243h1v27h-1zM325 243h1v5h-1zM330 244h1v26h-1zM331 244h1v5h-1zM336 246h1v24h-1zM337 246h1v4h-1zM100 216h1v16h-1zM99 224h1v8h-1zM98 231h3v2h-3z" fill="#00CC00"/>
<rect x="337" y="141" width="1" height="135" fill="#D8D8D8"/>
<path d="M48 410h1v27h-1zM59 357h1v80h-1zM73 423h1v14h-1zM75 410h1v27h-1zM90 383h1v54h-1zM91 357h1v80h-1zM101 397h1v40h-1zM104 370h1v67h-1zM119 423h1v14h-1zM123 423h1v14h-1zM140 423h1v14h-1zM145 397h1v40h-1zM153 397h1v40h-1zM155 423h1v14h-1zM157 370h1v67h-1zM158 370h1v67h-1zM161 397h1v40h-1zM163 423h1v14h-1zM164 423h1v14h-1zM168 423h1v14h-1zM176 423h1v14h-1zM190 410h1v27h-1zM192 397h1v40h-1zM193 370h1v67h-1zM196 397h1v40h-1zM198 423h1v14h-1zM199 423h1v14h-1zM201 397h1v40h-1zM203 423h1v14h-1zM209 410h1v27h-1zM210 410h1v27h-1zM211 343h1v94h-1zM212 397h1v40h-1zM215 397h1v40h-1zM216 383h1v54h-1zM218 317h1v120h-1zM219 383h1v54h-1zM225 397h1v40h-1zM227 397h1v40h-1zM230 370h1v67h-1zM233 397h1v40h-1zM234 397h1v40h-1zM235 397h1v40h-1zM240 410h1v27h-1zM243 397h1v40h-1zM248 410h1v27h-1zM249 410h1v27h-1zM255 397h1v40h-1zM257 397h1v40h-1zM258 397h1v40h-1zM262 410h1v27h-1zM263 423h1v14h-1zM264 423h1v14h-1zM265 423h1v14h-1zM266 383h1v54h-1zM269 397h1v40h-1zM273 410h1v27h-1zM275 410h1v27h-1zM277 370h1v67h-1zM279 410h1v27h-1zM283 397h1v40h-1zM284 423h1v14h-1zM289 423h1v14h-1zM292 410h1v27h-1zM298 410h1v27h-1zM302 410h1v27h-1zM307 397h1v40h-1zM310 423h1v14h-1zM313 383h1v54h-1zM318 357h1v80h-1zM319 330h1v107h-1zM325 383h1v54h-1zM330 423h1v14h-1zM335 423h1v14h-1z" fill="#40FF00"/>
<path d="M48 371h1v2h-1zM49 371h1v3h-1zM50 372h1v2h-1zM51 369h1v5h-1zM52 369h1v6h-1zM53 372h1v6h-1zM54 368h1v6h-1zM55 371h1v3h-1zM56 372h1v2h-1zM57 372h1v3h-1zM58 372h1v3h-1zM59 372h1v3h-1zM60 373h1v14h-1zM61 372h1v5h-1zM62 372h1v5h-1zM63 372h1v5h-1zM64 372h1v2h-1zM65 372h1v4h-1zM66 374h1v3h-1zM67 375h1v2h-1zM68 372h1v5h-1zM69 372h1v5h-1zM70 373h1v4h-1zM71 373h1v3h-1zM72 374h1v7h-1zM73 373h1v3h-1zM74 363h1v12h-1zM75 369h1v7h-1zM76 374h1v8h-1zM77 373h1v4h-1zM78 373h1v2h-1zM79 373h1v3h-1zM80 372h1v4h-1zM81 372h1v5h-1zM82 374h1v3h-1zM83 373h1v3h-1zM84 373h1v3h-1zM85 373h1v3h-1zM86 373h1v2h-1zM87 372h1v3h-1zM88 372h1v3h-1zM89 373h1v2h-1zM90 372h1v3h-1zM91 372h1v3h-1zM92 373h1v3h-1zM93 373h1v3h-1zM94 373h1v6h-1zM95 373h1v3h-1zM96 373h1v4h-1zM97 367h1v10h-1zM98 359h1v16h-1zM99 372h1v3h-1zM100 372h1v4h-1zM101 374h1v3h-1zM102 372h1v5h-1zM103 372h1v2h-1zM104 372h1v2h-1zM105 372h1v4h-1zM106 374h1v9h-1zM107 374h1v3h-1zM108 373h1v4h-1zM109 373h1v2h-1zM110 372h1v3h-1zM111 372h1v4h-1zM112 374h1v3h-1zM113 372h1v5h-1zM114 372h1v4h-1zM115 374h1v13h-1zM116 372h1v4h-1zM117 372h1v3h-1zM118 372h1v3h-1zM119 372h1v4h-1zM120 374h1v3h-1zM121 375h1v2h-1zM122 375h1v2h-1zM123 372h1v5h-1zM124 362h1v13h-1zM125 373h1v3h-1zM126 373h1v3h-1zM127 373h1v3h-1zM128 373h1v3h-1zM129 373h1v2h-1zM130 373h1v2h-1zM131 372h1v3h-1zM132 372h1v3h-1zM133 373h1v2h-1zM134 373h1v4h-1zM135 373h1v4h-1zM136 373h1v6h-1zM137 373h1v3h-1zM138 374h1v2h-1zM139 373h1v3h-1zM140 373h1v4h-1zM141 375h1v2h-1zM142 374h1v3h-1zM143 372h1v4h-1zM144 372h1v2h-1zM145 372h1v13h-1zM146 375h1v2h-1zM147 369h1v8h-1zM148 372h1v7h-1zM149 372h1v3h-1zM150 373h1v3h-1zM151 374h1v8h-1zM152 375h1v2h-1zM153 374h1v3h-1zM154 374h1v3h-1zM155 373h1v4h-1zM156 373h1v3h-1zM157 373h1v3h-1zM158 372h1v3h-1zM159 372h1v4h-1zM160 373h1v3h-1zM161 373h1v2h-1zM162 372h1v3h-1zM163 372h1v2h-1zM164 372h1v4h-1zM165 373h1v3h-1zM166 373h1v3h-1zM167 374h1v3h-1zM168 373h1v4h-1zM169 373h1v2h-1zM170 373h1v3h-1zM171 374h1v3h-1zM172 374h1v3h-1zM173 373h1v3h-1zM174 372h1v3h-1zM175 372h1v3h-1zM176 372h1v6h-1zM177 372h1v3h-1zM178 373h1v8h-1zM179 375h1v2h-1zM180 373h1v4h-1zM181 372h1v3h-1zM182 372h1v3h-1zM183 373h1v2h-1zM184 373h1v3h-1zM185 372h1v4h-1zM186 372h1v3h-1zM187 373h1v2h-1zM188 373h1v3h-1zM189 373h1v3h-1zM190 373h1v9h-1zM191 371h1v5h-1zM192 373h1v3h-1zM193 373h1v3h-1zM194 374h1v3h-1zM195 375h1v2h-1zM196 373h1v4h-1zM197 373h1v3h-1zM198 373h1v3h-1zM199 373h1v7h-1zM200 373h1v3h-1zM201 373h1v3h-1zM202 373h1v3h-1zM203 374h1v3h-1zM204 373h1v4h-1zM205 372h1v3h-1zM206 370h1v5h-1zM207 373h1v2h-1zM208 372h1v3h-1zM209 369h1v6h-1zM210 373h1v3h-1zM211 372h1v4h-1zM212 372h1v5h-1zM213 373h1v4h-1zM214 372h1v3h-1zM215 372h1v2h-1zM216 372h1v4h-1zM217 374h1v2h-1zM218 374h1v6h-1zM219 372h1v8h-1zM220 372h1v3h-1zM221 373h1v4h-1zM222 373h1v4h-1zM223 373h1v3h-1zM224 374h1v3h-1zM225 367h1v10h-1zM226 372h1v5h-1zM227 375h1v2h-1zM228 375h1v2h-1zM229 373h1v4h-1zM230 372h1v3h-1zM231 368h1v8h-1zM232 373h1v3h-1zM233 373h1v2h-1zM234 373h1v7h-1zM235 375h1v2h-1zM236 373h1v4h-1zM237 373h1v7h-1zM238 372h1v4h-1zM239 372h1v3h-1zM240 373h1v2h-1zM241 373h1v2h-1zM242 372h1v3h-1zM243 372h1v4h-1zM244 373h1v3h-1zM245 373h1v3h-1zM246 374h1v2h-1zM247 369h1v7h-1zM248 372h1v7h-1zM249 357h1v17h-1zM250 372h1v3h-1zM251 373h1v3h-1zM252 369h1v7h-1zM253 372h1v3h-1zM254 372h1v5h-1zM255 369h1v8h-1zM256 369h1v7h-1zM257 374h1v3h-1zM258 375h1v2h-1zM259 374h1v3h-1zM260 374h1v8h-1zM261 373h1v4h-1zM262 371h1v6h-1zM263 374h1v3h-1zM264 374h1v3h-1zM265 374h1v3h-1zM266 373h1v6h-1zM267 373h1v3h-1zM268 372h1v7h-1zM269 372h1v6h-1zM270 372h1v2h-1zM271 372h1v5h-1zM272 369h1v8h-1zM273 373h1v4h-1zM274 372h1v5h-1zM275 373h1v4h-1zM276 372h1v3h-1zM277 372h1v3h-1zM278 373h1v4h-1zM279 372h1v5h-1zM280 372h1v4h-1zM281 373h1v3h-1zM282 372h1v5h-1zM283 375h1v2h-1zM284 372h1v5h-1zM285 372h1v3h-1zM286 373h1v2h-1zM287 373h1v3h-1zM288 373h1v3h-1zM289 373h1v4h-1zM290 372h1v5h-1zM291 372h1v2h-1zM292 372h1v5h-1zM293 369h1v8h-1zM294 372h1v5h-1zM295 374h1v3h-1zM296 373h1v3h-1zM297 373h1v3h-1zM298 374h1v3h-1zM299 372h1v5h-1zM300 372h1v3h-1zM301 372h1v3h-1zM302 372h1v5h-1zM303 372h1v5h-1zM304 372h1v4h-1zM305 372h1v7h-1zM306 372h1v2h-1zM307 372h1v4h-1zM308 373h1v3h-1zM309 373h1v2h-1zM310 372h1v3h-1zM311 371h1v5h-1zM312 374h1v3h-1zM313 373h1v4h-1zM314 373h1v8h-1zM315 373h1v4h-1zM316 372h1v3h-1zM317 372h1v5h-1zM318 357h1v20h-1zM319 372h1v4h-1zM320 374h1v2h-1zM321 374h1v3h-1zM322 372h1v5h-1zM323 372h1v5h-1zM324 373h1v4h-1zM325 373h1v3h-1zM326 374h1v2h-1zM327 374h1v5h-1zM328 366h1v10h-1zM329 372h1v4h-1zM330 373h1v3h-1zM331 362h1v15h-1zM332 373h1v4h-1zM333 373h1v3h-1zM334 374h1v4h-1zM335 376h1v3h-1zM336 377h1v8h-1zM337 375h1v4h-1z" fill="#FF00FF"/>
<rect x="337" y="303" width="1" height="135" fill="#D8D8D8"/>
</svg>
<div class="t" style="right:600px;top:134px;color:#000;text-align:right;transform-origin:100% 0;">50</div>
<div class="t" style="right:600px;top:161px;color:#000;text-align:right;transform-origin:100% 0;">40</div>
<div class="t" style="right:600px;top:188px;color:#000;text-align:right;transform-origin:100% 0;">30</div>
<div class="t" style="right:600px;top:214px;color:#000;text-align:right;transform-origin:100% 0;">20</div>
<div class="t" style="right:600px;top:241px;color:#000;text-align:right;transform-origin:100% 0;">10</div>
<div class="t" style="left:471px;top:134px;color:#000;">16</div>
<div class="t" style="left:471px;top:151px;color:#000;">14</div>
<div class="t" style="left:471px;top:167px;color:#000;">12</div>
<div class="t" style="left:471px;top:184px;color:#000;">10</div>
<div class="t" style="left:471px;top:201px;color:#000;">8</div>
<div class="t" style="left:471px;top:217px;color:#000;">6</div>
<div class="t" style="left:471px;top:234px;color:#000;">4</div>
<div class="t" style="left:471px;top:251px;color:#000;">2</div>
<div class="t" style="right:600px;top:296px;color:#000;text-align:right;transform-origin:100% 0;">10</div>
<div class="t" style="right:600px;top:323px;color:#000;text-align:right;transform-origin:100% 0;">8</div>
<div class="t" style="right:600px;top:350px;color:#000;text-align:right;transform-origin:100% 0;">6</div>
<div class="t" style="right:600px;top:376px;color:#000;text-align:right;transform-origin:100% 0;">4</div>
<div class="t" style="right:600px;top:403px;color:#000;text-align:right;transform-origin:100% 0;">2</div>
<div class="t" style="left:471px;top:296px;color:#000;">20</div>
<div class="t" style="left:471px;top:323px;color:#000;">16</div>
<div class="t" style="left:471px;top:349px;color:#000;">12</div>
<div class="t" style="left:471px;top:376px;color:#000;">8</div>
<div class="t" style="left:471px;top:403px;color:#000;">4</div>
<div class="t" style="left:30px;top:278px;width:40px;text-align:center;transform-origin:50% 0">0.0</div>
<div class="t" style="left:30px;top:440px;width:40px;text-align:center;transform-origin:50% 0">0.0</div>
<div class="t" style="left:82px;top:278px;width:40px;text-align:center;transform-origin:50% 0">1.0</div>
<div class="t" style="left:82px;top:440px;width:40px;text-align:center;transform-origin:50% 0">1.0</div>
<div class="t" style="left:134px;top:278px;width:40px;text-align:center;transform-origin:50% 0">2.0</div>
<div class="t" style="left:134px;top:440px;width:40px;text-align:center;transform-origin:50% 0">2.0</div>
<div class="t" style="left:186px;top:278px;width:40px;text-align:center;transform-origin:50% 0">3.0</div>
<div class="t" style="left:186px;top:440px;width:40px;text-align:center;transform-origin:50% 0">3.0</div>
<div class="t" style="left:239px;top:278px;width:40px;text-align:center;transform-origin:50% 0">4.0</div>
<div class="t" style="left:239px;top:440px;width:40px;text-align:center;transform-origin:50% 0">4.0</div>
<div class="t" style="left:291px;top:278px;width:40px;text-align:center;transform-origin:50% 0">5.0</div>
<div class="t" style="left:291px;top:440px;width:40px;text-align:center;transform-origin:50% 0">5.0</div>
<div class="t" style="left:343px;top:278px;width:40px;text-align:center;transform-origin:50% 0">6.0</div>
<div class="t" style="left:343px;top:440px;width:40px;text-align:center;transform-origin:50% 0">6.0</div>
<div class="t" style="left:395px;top:278px;width:40px;text-align:center;transform-origin:50% 0">7.0</div>
<div class="t" style="left:395px;top:440px;width:40px;text-align:center;transform-origin:50% 0">7.0</div>
<div class="t" style="left:448px;top:278px;width:40px;text-align:center;transform-origin:50% 0">8.0</div>
<div class="t" style="left:448px;top:440px;width:40px;text-align:center;transform-origin:50% 0">8.0</div>
<div class="gb" style="left:491px;top:135px;width:140px;height:84px"></div>
<div class="t" style="left:499px;top:129px;color:#0046D5;padding:0 2px;background:#FBFBFB">Disk-Info</div>
<div class="t" style="left:500px;top:144px;color:#000;">Typ:</div>
<div class="t" style="left:545px;top:144px;color:#000080;">DVD+R DL</div>
<div class="t" style="left:500px;top:161px;color:#000;">ID:</div>
<div class="t" style="left:545px;top:161px;color:#000080;">MKM 001</div>
<div class="t" style="left:500px;top:179px;color:#000;">Datum:</div>
<div class="t" style="left:545px;top:179px;color:#000080;">25 Feb 2006</div>
<div class="t" style="left:500px;top:197px;color:#000;">Label:</div>
<div class="t" style="left:545px;top:197px;color:#000080;">-</div>
<div class="gb" style="left:491px;top:225px;width:140px;height:205px"></div>
<div class="t" style="left:499px;top:220px;color:#0046D5;padding:0 2px;background:#FBFBFB">Einstellungen</div>
<div class="t" style="left:500px;top:235px;color:#000;">Geschwindigkeit:</div>
<div class="inp" style="left:500px;top:250px;width:84px;height:21px"></div>
<div class="a" style="left:567px;top:252px;width:15px;height:17px;border-radius:2px;background:linear-gradient(135deg,#D0DEFC,#B0C6F6)"></div>
<svg class="a" style="left:570px;top:257px" width="10" height="8" viewBox="0 0 10 8"><path d="M1.5 2L5 5.5L8.5 2" fill="none" stroke="#4D6185" stroke-width="2"/></svg>
<div class="t" style="left:505px;top:255px;color:#000;">8 X</div>
<div class="a" style="left:592px;top:248px;width:23px;height:23px;background:#ECE9D8;box-shadow:inset 1px 1px #fff, inset -1px -1px #716F64, inset -2px -2px #ACA899"></div>
<div class="a" style="left:596px;top:251px;width:14px;height:16px;border:1px solid #000;box-shadow:inset 1px 1px 0 #505050, inset -1px -1px 0 #505050;background:#fff"></div>
<svg class="a" style="left:596px;top:251px" width="14" height="16" viewBox="0 0 14 16">
<path d="M4 8.5V5.5Q4 4.5 5 4.5H8" fill="none" stroke="#109010" stroke-width="1.3"/><path d="M7.5 2L10.5 4.5L7.5 7z" fill="#109010"/>
<path d="M10 8V11Q10 12 9 12H6" fill="none" stroke="#109010" stroke-width="1.3"/><path d="M6.5 9.5L3.5 12L6.5 14.5z" fill="#109010"/>
</svg>
<div class="t" style="left:502px;top:282px;color:#000;">Start:</div>
<div class="inp" style="left:554px;top:276px;width:60px;height:20px"></div>
<div class="t" style="left:558px;top:280px;color:#000;">0000 MB</div>
<div class="t" style="left:502px;top:304px;color:#000;">Ende:</div>
<div class="inp" style="left:554px;top:299px;width:60px;height:20px"></div>
<div class="t" style="left:558px;top:303px;color:#000;">5677 MB</div>
<div class="a" style="left:495px;top:320px;width:131px;height:108px;overflow:hidden">
<div class="cb" style="left:7px;top:4px;border-color:#1C5180"></div>
<div class="t" style="left:23px;top:5px;color:#000">Schnelles Scannen</div>
<div class="cb" style="left:7px;top:25px;border-color:#1C5180"></div>
<svg class="a" style="left:9px;top:27px" width="9" height="9" viewBox="0 0 9 9"><path d="M0.8 3.6L3.2 6.2L8.2 1.2" fill="none" stroke="#21A121" stroke-width="2.4"/></svg>
<div class="t" style="left:23px;top:26px;color:#000">C1/PIE anzeigen</div>
<div class="cb" style="left:7px;top:41px;border-color:#1C5180"></div>
<svg class="a" style="left:9px;top:43px" width="9" height="9" viewBox="0 0 9 9"><path d="M0.8 3.6L3.2 6.2L8.2 1.2" fill="none" stroke="#21A121" stroke-width="2.4"/></svg>
<div class="t" style="left:23px;top:42px;color:#000">C2/PIF anzeigen</div>
<div class="cb" style="left:7px;top:58px;border-color:#1C5180"></div>
<svg class="a" style="left:9px;top:60px" width="9" height="9" viewBox="0 0 9 9"><path d="M0.8 3.6L3.2 6.2L8.2 1.2" fill="none" stroke="#21A121" stroke-width="2.4"/></svg>
<div class="t" style="left:23px;top:59px;color:#000">Jitter anzeigen</div>
<div class="cb" style="left:7px;top:74px;border-color:#1C5180"></div>
<svg class="a" style="left:9px;top:76px" width="9" height="9" viewBox="0 0 9 9"><path d="M0.8 3.6L3.2 6.2L8.2 1.2" fill="none" stroke="#21A121" stroke-width="2.4"/></svg>
<div class="t" style="left:23px;top:75px;color:#000">Lesegeschwindigkeit anzeigen</div>
<div class="cb" style="left:7px;top:90px;border-color:#CAC8BB"></div>
<svg class="a" style="left:9px;top:92px" width="9" height="9" viewBox="0 0 9 9"><path d="M0.8 3.6L3.2 6.2L8.2 1.2" fill="none" stroke="#CAC8BB" stroke-width="2.4"/></svg>
<div class="t" style="left:23px;top:91px;color:#ACA899">Schreibgeschwindigkeit anzeigen</div>
</div>
<div class="gb" style="left:491px;top:435px;width:140px;height:27px"></div>
<div class="t" style="left:502px;top:443px;color:#000;">Qualitätsindex:</div>
<div class="t" style="right:20px;top:443px;color:#000080;text-align:right;transform-origin:100% 0;">95</div>
<div class="gb" style="left:491px;top:467px;width:140px;height:57px"></div>
<div class="t" style="left:502px;top:477px;color:#000;">Fortschritt:</div>
<div class="t" style="right:20px;top:477px;color:#000080;text-align:right;transform-origin:100% 0;">100 %</div>
<div class="t" style="left:502px;top:493px;color:#000;">Position:</div>
<div class="t" style="right:20px;top:493px;color:#000080;text-align:right;transform-origin:100% 0;">5676 MB</div>
<div class="t" style="left:502px;top:509px;color:#000;">Geschwindigkeit:</div>
<div class="t" style="right:20px;top:509px;color:#000080;text-align:right;transform-origin:100% 0;">3.27 X</div>
<div class="a" style="left:15px;top:468px;width:146px;height:57px;border:1px solid #fff"></div>
<div class="a" style="left:14px;top:467px;width:146px;height:57px;border:1px solid #ACA899"></div>
<div class="t" style="left:22px;top:462px;height:13px;padding:0 2px 0 16px;background:#F6F5F1">PI Errors</div>
<div class="a" style="left:24px;top:464px;width:8px;height:8px;border:1px solid #000;background:#00FFFF"></div>
<div class="t" style="left:23px;top:478px;color:#000;">Durchschnitt</div>
<div class="t" style="right:490px;top:478px;color:#000080;text-align:right;transform-origin:100% 0;">5.95</div>
<div class="t" style="left:23px;top:493px;color:#000;">Maximum:</div>
<div class="t" style="right:490px;top:493px;color:#000080;text-align:right;transform-origin:100% 0;">38</div>
<div class="t" style="left:23px;top:508px;color:#000;">Gesamt:</div>
<div class="t" style="right:490px;top:508px;color:#000080;text-align:right;transform-origin:100% 0;">89719</div>
<div class="a" style="left:173px;top:468px;width:146px;height:57px;border:1px solid #fff"></div>
<div class="a" style="left:172px;top:467px;width:146px;height:57px;border:1px solid #ACA899"></div>
<div class="t" style="left:180px;top:462px;height:13px;padding:0 2px 0 16px;background:#F6F5F1">PI Failures</div>
<div class="a" style="left:182px;top:464px;width:8px;height:8px;border:1px solid #000;background:#FFFF00"></div>
<div class="t" style="left:181px;top:478px;color:#000;">Durchschnitt</div>
<div class="t" style="right:332px;top:478px;color:#000080;text-align:right;transform-origin:100% 0;">0.09</div>
<div class="t" style="left:181px;top:493px;color:#000;">Maximum:</div>
<div class="t" style="right:332px;top:493px;color:#000080;text-align:right;transform-origin:100% 0;">9</div>
<div class="t" style="left:181px;top:508px;color:#000;">Gesamt:</div>
<div class="t" style="right:332px;top:508px;color:#000080;text-align:right;transform-origin:100% 0;">1246</div>
<div class="a" style="left:332px;top:468px;width:147px;height:43px;border:1px solid #fff"></div>
<div class="a" style="left:331px;top:467px;width:147px;height:43px;border:1px solid #ACA899"></div>
<div class="t" style="left:339px;top:462px;height:13px;padding:0 2px 0 16px;background:#F6F5F1">Jitter</div>
<div class="a" style="left:341px;top:464px;width:8px;height:8px;border:1px solid #000;background:#FF00FF"></div>
<div class="t" style="left:340px;top:478px;color:#000;">Durchschnitt</div>
<div class="t" style="right:172px;top:478px;color:#000080;text-align:right;transform-origin:100% 0;">9.03 %</div>
<div class="t" style="left:340px;top:493px;color:#000;">Maximum:</div>
<div class="t" style="right:172px;top:493px;color:#000080;text-align:right;transform-origin:100% 0;">11.7 %</div>
<div class="t" style="left:341px;top:512px;color:#000;">PO Ausfälle:</div>
<div class="t" style="right:171px;top:512px;color:#000080;text-align:right;transform-origin:100% 0;">0</div>
</body></html>
